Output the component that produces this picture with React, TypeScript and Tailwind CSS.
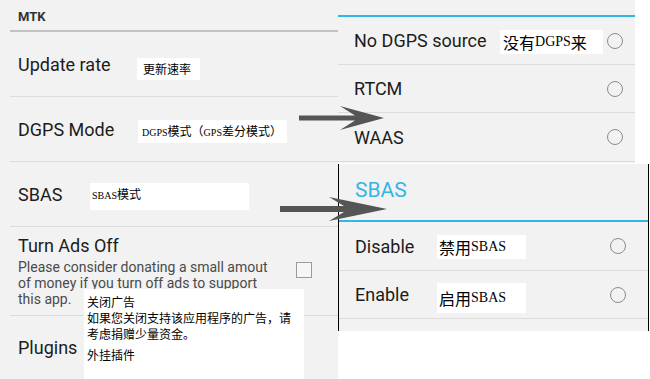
import React from "react";

const roboto = { fontFamily: "Roboto, 'Liberation Sans', sans-serif" };
const cjk = { fontFamily: "'Noto Sans CJK SC', sans-serif" };
const serif = { fontFamily: "'Liberation Serif', 'DejaVu Serif', serif" };

function Radio() {
  return <div className="w-[16px] h-[16px] rounded-full border border-[#8c8c8c] shrink-0" />;
}

function L({ children, size = 10 }: { children: React.ReactNode; size?: number }) {
  return <span style={{ ...serif, fontSize: size }}>{children}</span>;
}

function Arrow({ width, thick, headLen, headHalf }: { width: number; thick: number; headLen: number; headHalf: number }) {
  const h = headHalf * 2 + 2;
  const c = h / 2;
  const T = width;
  const d = `M0,${c - thick / 2} L${T - headLen + 15},${c - thick / 2} L${T - headLen},${c - headHalf} L${T},${c} L${T - headLen},${c + headHalf} L${T - headLen + 15},${c + thick / 2} L0,${c + thick / 2} Z`;
  return (
    <svg width={width} height={h} viewBox={`0 0 ${width} ${h}`}>
      <path d={d} fill="#555555" />
    </svg>
  );
}

export default function App() {
  return (
    <div className="relative w-[650px] h-[379px] bg-white overflow-hidden text-[#1c1c1c]" style={roboto}>
      {/* Left panel */}
      <div className="absolute left-0 top-0 w-[338px] h-[379px] bg-[#f2f2f2] flex flex-col">
        <div className="h-[30px] pl-[18px] pt-[9px] text-[13px] leading-[16px] font-bold text-[#333]">MTK</div>
        <div className="ml-[10px] h-[2px] bg-[#c2c2c2]" />
        <div className="h-[64px] flex items-center pl-[18px] text-[18px]">Update rate</div>
        <div className="ml-[10px] h-px bg-[#dcdcdc]" />
        <div className="h-[64px] flex items-center pl-[18px] text-[18px]">DGPS Mode</div>
        <div className="ml-[10px] h-px bg-[#dcdcdc]" />
        <div className="h-[64px] flex items-center pl-[18px] text-[18px]">SBAS</div>
        <div className="ml-[10px] h-px bg-[#dcdcdc]" />
        <div className="h-[88px] flex pl-[18px] pt-[8px]">
          <div className="flex flex-col">
            <div className="text-[18px] leading-[22px]">Turn Ads Off</div>
            <div className="mt-[2px] w-[256px] text-[14px] leading-[16px] text-[#4a4a4a]">
              Please consider donating a small amout of money if you turn off ads to support this app.
            </div>
          </div>
          <div className="ml-[22px] mt-[27px] w-[16px] h-[16px] border border-[#9a9a9a] bg-[#f6f6f6]" />
        </div>
        <div className="ml-[10px] h-px bg-[#dcdcdc]" />
        <div className="pl-[18px] pt-[21px] text-[18px] leading-[22px]">Plugins</div>
      </div>

      {/* Right top panel */}
      <div className="absolute left-[338px] top-0 w-[297px] h-[163px] bg-[#f2f2f2] flex flex-col">
        <div className="h-[15px]" />
        <div className="h-[2px] bg-[#33b5e5]" />
        <div className="h-[47px] flex items-center justify-between pl-[16px] pr-[12px] text-[18px]">
          <span>No DGPS source</span>
          <Radio />
        </div>
        <div className="h-px bg-[#dcdcdc]" />
        <div className="h-[47px] flex items-center justify-between pl-[16px] pr-[12px] text-[18px]">
          <span>RTCM</span>
          <Radio />
        </div>
        <div className="h-px bg-[#dcdcdc]" />
        <div className="h-[48px] flex items-center justify-between pl-[16px] pr-[12px] text-[18px]">
          <span>WAAS</span>
          <Radio />
        </div>
        <div className="h-px bg-[#dcdcdc]" />
      </div>

      {/* Right bottom panel */}
      <div className="absolute left-[338px] top-[164px] w-[311px] h-[167px] border-l border-r border-black bg-[#f2f2f2] flex flex-col">
        <div className="h-[56px] pl-[16px] pt-[14px] text-[21px] leading-[24px] text-[#33b5e5]">SBAS</div>
        <div className="h-[2px] bg-[#33b5e5]" />
        <div className="h-[48px] flex items-center justify-between pl-[16px] pr-[22px] text-[18px]">
          <span>Disable</span>
          <Radio />
        </div>
        <div className="h-px bg-[#dcdcdc]" />
        <div className="h-[47px] flex items-center justify-between pl-[16px] pr-[22px] text-[18px]">
          <span>Enable</span>
          <Radio />
        </div>
        <div className="h-px bg-[#dcdcdc]" />
      </div>

      {/* Annotation boxes */}
      <div className="absolute left-[137px] top-[58px] w-[63px] h-[22px] bg-white flex items-center pl-[6px] text-[12px] leading-[16px] text-black" style={cjk}>
        更新速率
      </div>
      <div className="absolute left-[138px] top-[120px] w-[149px] h-[23px] bg-white pl-[4px] pt-[3px] text-[12px] leading-[16px] text-black whitespace-nowrap" style={cjk}>
        <L>DGPS</L>模式（<L>GPS</L>差分模式）
      </div>
      <div className="absolute left-[90px] top-[183px] w-[159px] h-[27px] bg-white pl-[2px] pt-[3px] text-[12px] leading-[16px] text-black whitespace-nowrap" style={cjk}>
        <L>SBAS</L>模式
      </div>
      <div className="absolute left-[84px] top-[289px] w-[220px] h-[90px] bg-white pl-[3px] pt-[5px] text-[12px] leading-[15px] text-black" style={cjk}>
        <div>关闭广告</div>
        <div className="whitespace-nowrap mt-[1px]">如果您关闭支持该应用程序的广告，请</div>
        <div className="mt-[1px]">考虑捐赠少量资金。</div>
        <div className="mt-[6px]">外挂插件</div>
      </div>
      <div className="absolute left-[500px] top-[30px] w-[103px] h-[24px] bg-white flex items-center pl-[3px] text-[16px] leading-[20px] text-black whitespace-nowrap" style={cjk}>
        没有<L size={14}>DGPS</L>来
      </div>
      <div className="absolute left-[437px] top-[235px] w-[89px] h-[24px] bg-white flex items-center pl-[2px] text-[16px] leading-[20px] text-black whitespace-nowrap" style={cjk}>
        禁用<L size={14}>SBAS</L>
      </div>
      <div className="absolute left-[437px] top-[283px] w-[89px] h-[30px] bg-white flex items-center pl-[2px] text-[16px] leading-[20px] text-black whitespace-nowrap" style={cjk}>
        启用<L size={14}>SBAS</L>
      </div>

      {/* Arrows */}
      <div className="absolute left-[299px] top-[105px]">
        <Arrow width={85} thick={5} headLen={44} headHalf={12} />
      </div>
      <div className="absolute left-[280px] top-[196px]">
        <Arrow width={107} thick={6} headLen={58} headHalf={12} />
      </div>
    </div>
  );
}
